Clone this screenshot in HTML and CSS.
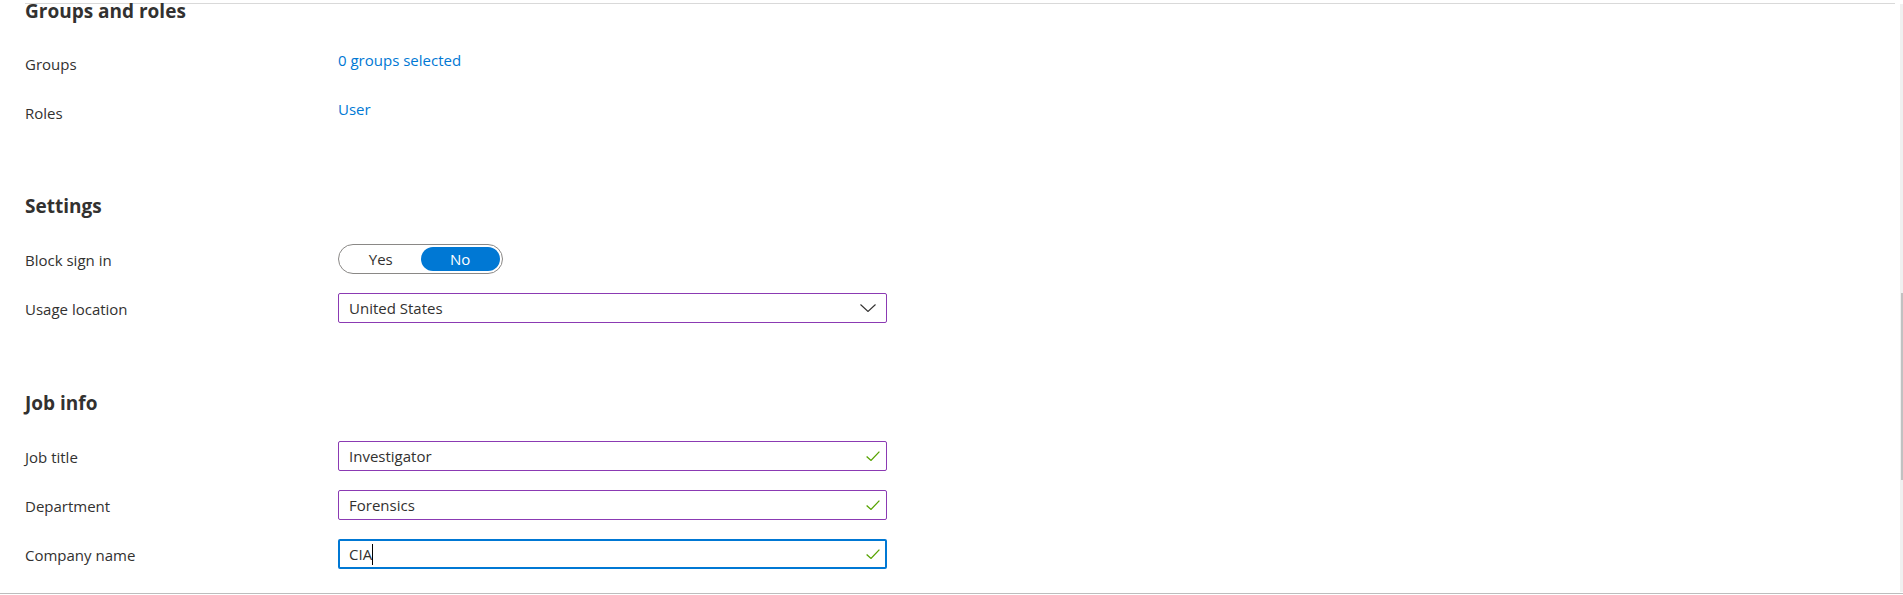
FILE: index.html
```html
<!DOCTYPE html>
<html lang="en">
<head>
<meta charset="utf-8">
<title>User settings</title>
<link rel="stylesheet" href="styles.css">
</head>
<body>
<div class="page">
  <div class="main">
    <div class="panel">
      <section class="section section-groups">
        <h2 class="section-title">Groups and roles</h2>
        <div class="row row-link row-first">
          <div class="label">Groups</div>
          <a class="link" href="#">0 groups selected</a>
        </div>
        <div class="row row-link">
          <div class="label">Roles</div>
          <a class="link" href="#">User</a>
        </div>
      </section>

      <section class="section section-settings">
        <h2 class="section-title">Settings</h2>
        <div class="row row-form row-first">
          <div class="label">Block sign in</div>
          <div class="toggle">
            <span class="toggle-opt">Yes</span>
            <span class="toggle-opt toggle-on">No</span>
          </div>
        </div>
        <div class="row row-form">
          <div class="label">Usage location</div>
          <div class="field field-dirty">
            <span class="field-text">United States</span>
            <svg class="chevron" width="16" height="8" viewBox="0 0 16 8"><path d="M0.5 0.5 L8 7.5 L15.5 0.5" fill="none" stroke="#323130" stroke-width="1.1"/></svg>
          </div>
        </div>
      </section>

      <section class="section section-job">
        <h2 class="section-title">Job info</h2>
        <div class="row row-form row-first">
          <div class="label">Job title</div>
          <div class="field field-dirty">
            <span class="field-text">Investigator</span>
            <svg class="check" width="14" height="10" viewBox="0 0 14 10"><path d="M0.6 5.4 L5 9.4 L13.4 0.6" fill="none" stroke="#57a300" stroke-width="1.3"/></svg>
          </div>
        </div>
        <div class="row row-form">
          <div class="label">Department</div>
          <div class="field field-dirty">
            <span class="field-text">Forensics</span>
            <svg class="check" width="14" height="10" viewBox="0 0 14 10"><path d="M0.6 5.4 L5 9.4 L13.4 0.6" fill="none" stroke="#57a300" stroke-width="1.3"/></svg>
          </div>
        </div>
        <div class="row row-form">
          <div class="label">Company name</div>
          <div class="field field-focus">
            <span class="field-text">CIA<span class="caret"></span></span>
            <svg class="check" width="14" height="10" viewBox="0 0 14 10"><path d="M0.6 5.4 L5 9.4 L13.4 0.6" fill="none" stroke="#57a300" stroke-width="1.3"/></svg>
          </div>
        </div>
      </section>
    </div>
  </div>
  <div class="scrollbar"><div class="thumb"></div></div>
</div>
</body>
</html>
```

FILE: styles.css
```css
* {
  box-sizing: border-box;
}

html, body {
  margin: 0;
  padding: 0;
  background: #ffffff;
}

body {
  font-family: "Open Sans", "Noto Sans", "Liberation Sans", sans-serif;
  font-size: 15px;
  line-height: 20px;
  color: #323130;
  overflow: hidden;
}

.page {
  display: flex;
  height: 594px;
  border-bottom: 1px solid #bdbdbd;
}

.main {
  flex: 1;
  display: flex;
  flex-direction: column;
  min-width: 0;
}

.panel {
  flex: 1;
  margin: 3px 5px 0 25px;
  border-top: 1px solid #d9d9d9;
}

.section-title {
  margin: 0;
  font-size: 19px;
  line-height: 24px;
  font-weight: 700;
  color: #323130;
}

.section-groups .section-title {
  margin-top: -5px;
}

.section-settings .section-title {
  margin-top: 71px;
}

.section-job .section-title {
  margin-top: 68px;
}

.row {
  display: flex;
  align-items: flex-start;
}

.label {
  width: 313px;
  flex-shrink: 0;
  line-height: 20px;
}

.row-link {
  margin-top: 29px;
}

.row-link.row-first {
  margin-top: 31px;
}

.link {
  margin-top: -4px;
  color: #0078d4;
  text-decoration: none;
}

.row-form {
  margin-top: 19px;
  height: 30px;
}

.row-form.row-first {
  margin-top: 26px;
}

.row-form .label {
  margin-top: 6px;
}

.toggle {
  display: flex;
  width: 165px;
  height: 30px;
  padding: 2px;
  border: 1px solid #8a8886;
  border-radius: 15px;
}

.toggle-opt {
  flex: 1;
  display: flex;
  align-items: center;
  justify-content: center;
  border-radius: 12px;
  color: #323130;
}

.toggle-on {
  background: #0078d4;
  color: #ffffff;
}

.field {
  display: flex;
  align-items: center;
  justify-content: space-between;
  width: 549px;
  height: 30px;
  padding: 0 10px;
  border: 1px solid #8a8886;
  border-radius: 2px;
  background: #ffffff;
}

.field-dirty {
  border-color: #8b3ab3;
  padding-right: 6px;
}

.field-dirty .chevron {
  margin-right: 4px;
}

.field-focus {
  border: 2px solid #0078d4;
  padding: 0 5px 0 9px;
}

.field-text {
  display: flex;
  align-items: center;
  color: #323130;
}

.caret {
  display: inline-block;
  width: 1px;
  height: 21px;
  background: #000000;
}

.check,
.chevron {
  flex-shrink: 0;
  display: block;
}

.scrollbar {
  width: 3px;
  margin-top: 4px;
  margin-bottom: 1px;
  background: #f0f0f0;
  display: flex;
  flex-direction: column;
  align-items: flex-end;
}

.thumb {
  width: 2px;
  height: 187px;
  margin-top: 289px;
  background: #c1c1c1;
}
```
